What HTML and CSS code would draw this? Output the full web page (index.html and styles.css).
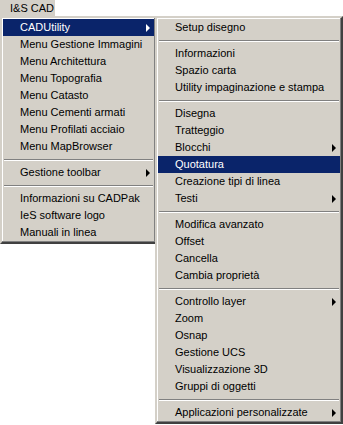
FILE: index.html
```html
<!DOCTYPE html>
<html lang="it">
<head>
    <meta charset="UTF-8">
    <title>I&amp;S CAD</title>
    <link rel="stylesheet" href="styles.css">
</head>
<body>
    <div class="menubar">
        <div class="menubar-item">I&amp;S CAD</div>
    </div>

    <div class="menus">
        <div class="menu menu-main">
            <div class="item active">CADUtility <span class="arrow"></span></div>
            <div class="item">Menu Gestione Immagini</div>
            <div class="item">Menu Architettura</div>
            <div class="item">Menu Topografia</div>
            <div class="item">Menu Catasto</div>
            <div class="item">Menu Cementi armati</div>
            <div class="item">Menu Profilati acciaio</div>
            <div class="item">Menu MapBrowser</div>
            <div class="sep"></div>
            <div class="item">Gestione toolbar <span class="arrow"></span></div>
            <div class="sep"></div>
            <div class="item">Informazioni su CADPak</div>
            <div class="item">IeS software logo</div>
            <div class="item">Manuali in linea</div>
        </div>

        <div class="menu menu-sub">
            <div class="item">Setup disegno</div>
            <div class="sep"></div>
            <div class="item">Informazioni</div>
            <div class="item">Spazio carta</div>
            <div class="item">Utility impaginazione e stampa</div>
            <div class="sep"></div>
            <div class="item">Disegna</div>
            <div class="item">Tratteggio</div>
            <div class="item">Blocchi <span class="arrow"></span></div>
            <div class="item active">Quotatura</div>
            <div class="item">Creazione tipi di linea</div>
            <div class="item">Testi <span class="arrow"></span></div>
            <div class="sep"></div>
            <div class="item">Modifica avanzato</div>
            <div class="item">Offset</div>
            <div class="item">Cancella</div>
            <div class="item">Cambia proprietà</div>
            <div class="sep"></div>
            <div class="item">Controllo layer <span class="arrow"></span></div>
            <div class="item">Zoom</div>
            <div class="item">Osnap</div>
            <div class="item">Gestione UCS</div>
            <div class="item">Visualizzazione 3D</div>
            <div class="item">Gruppi di oggetti</div>
            <div class="sep"></div>
            <div class="item">Applicazioni personalizzate <span class="arrow"></span></div>
        </div>
    </div>
</body>
</html>
```

FILE: styles.css
```css
body {
    margin: 0;
    padding: 0;
    background: #fff;
    color: #000;
    font-family: 'Liberation Sans', Arial, sans-serif;
    font-size: 11px;
}
.menubar {
    display: flex;
    height: 16px;
}
.menubar-item {
    box-sizing: border-box;
    width: 56px;
    height: 16px;
    line-height: 16px;
    padding-left: 10px;
    background: #d4d0c8;
    border-right: 1px solid #fff;
}
.menus {
    display: flex;
    align-items: flex-start;
}
.menu {
    background: #d4d0c8;
    box-sizing: border-box;
    padding: 1px;
    border: 2px solid;
    border-color: #d4d0c8 #404040 #404040 #d4d0c8;
    box-shadow: inset -1px -1px 0 #808080, inset 1px 1px 0 #fff;
    position: relative;
}
.menu-main {
    width: 157px;
}
.menu-sub {
    width: 188px;
    margin-left: -2px;
}
.item {
    display: flex;
    align-items: center;
    height: 17px;
    line-height: 17px;
    padding: 0 4px 0 17px;
    white-space: nowrap;
}
.item.active {
    background: #0a246a;
    color: #fff;
}
.arrow {
    margin-left: auto;
    width: 0;
    height: 0;
    border-left: 4px solid #000;
    border-top: 4px solid transparent;
    border-bottom: 4px solid transparent;
}
.item.active .arrow {
    border-left-color: #fff;
}
.sep {
    box-sizing: border-box;
    height: 9px;
    padding-top: 4px;
    margin: 0 1px;
}
.sep::before {
    content: '';
    display: block;
    height: 1px;
    background: #808080;
    border-bottom: 1px solid #fff;
}
```
